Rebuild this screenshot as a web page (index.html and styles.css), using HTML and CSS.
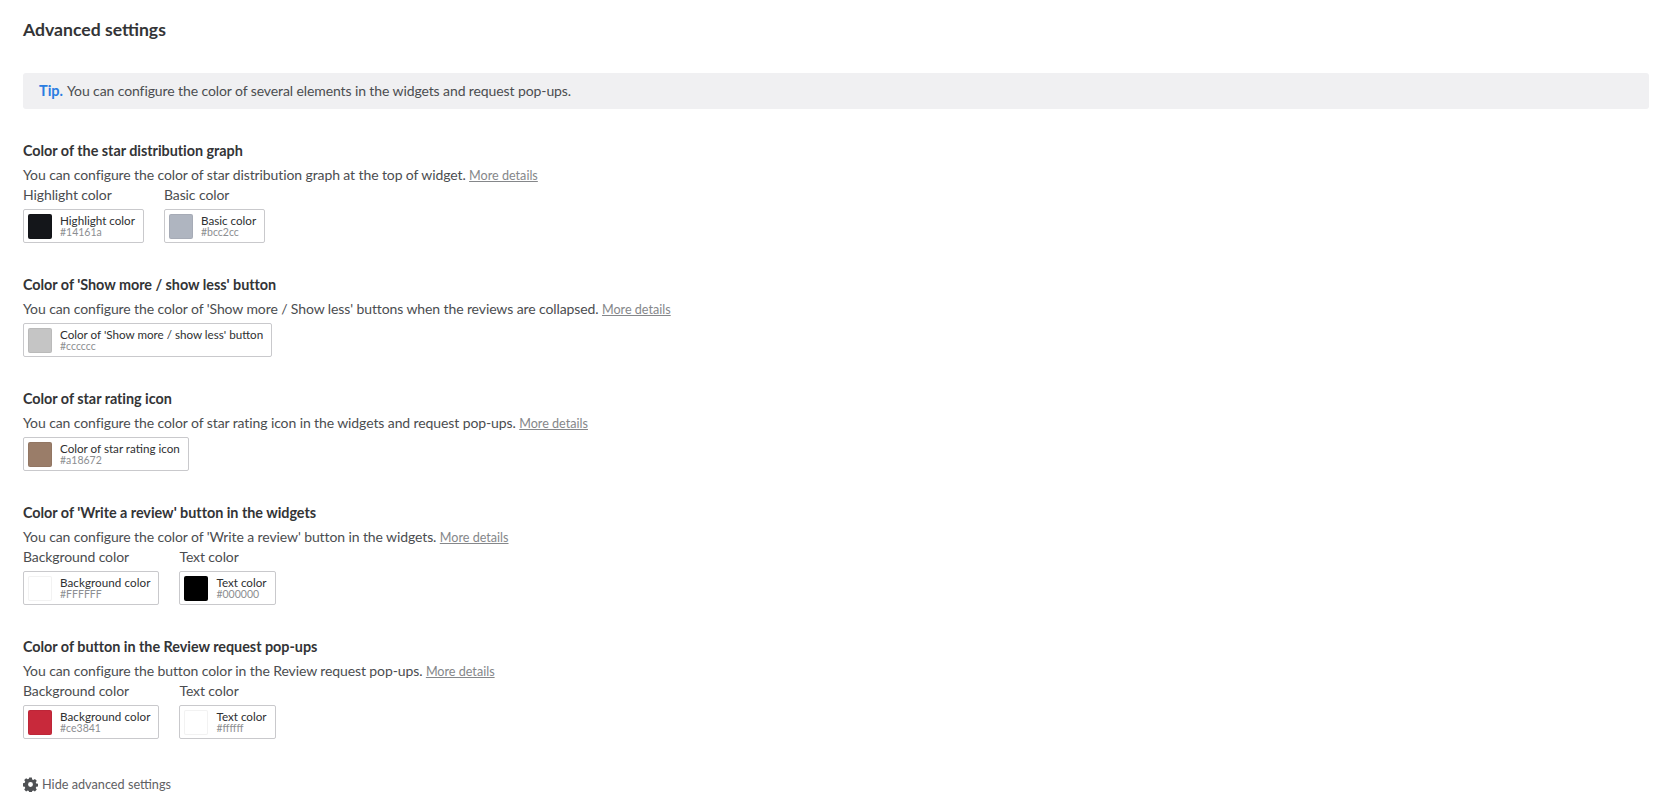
FILE: index.html
```html
<!DOCTYPE html>
<html lang="en">
<head>
<meta charset="utf-8">
<title>Advanced settings</title>
<link rel="stylesheet" href="styles.css">
</head>
<body>
<main class="page">
  <h1 class="page-title">Advanced settings</h1>
  <p class="tip"><strong class="tip-label">Tip.</strong> You can configure the color of several elements in the widgets and request pop-ups.</p>

  <section class="group">
    <h2 class="group-title">Color of the star distribution graph</h2>
    <p class="group-desc">You can configure the color of star distribution graph at the top of widget. <a class="more" href="#">More details</a></p>
    <div class="fields">
      <div class="field">
        <div class="field-label">Highlight color</div>
        <div class="picker"><span class="swatch c-14161a"></span><span class="picker-text"><span class="picker-name">Highlight color</span><span class="picker-value">#14161a</span></span></div>
      </div>
      <div class="field">
        <div class="field-label">Basic color</div>
        <div class="picker"><span class="swatch c-bcc2cc"></span><span class="picker-text"><span class="picker-name">Basic color</span><span class="picker-value">#bcc2cc</span></span></div>
      </div>
    </div>
  </section>

  <section class="group">
    <h2 class="group-title">Color of 'Show more / show less' button</h2>
    <p class="group-desc">You can configure the color of 'Show more / Show less' buttons when the reviews are collapsed. <a class="more" href="#">More details</a></p>
    <div class="fields">
      <div class="field">
        <div class="picker"><span class="swatch c-cccccc"></span><span class="picker-text"><span class="picker-name">Color of 'Show more / show less' button</span><span class="picker-value">#cccccc</span></span></div>
      </div>
    </div>
  </section>

  <section class="group">
    <h2 class="group-title">Color of star rating icon</h2>
    <p class="group-desc">You can configure the color of star rating icon in the widgets and request pop-ups. <a class="more" href="#">More details</a></p>
    <div class="fields">
      <div class="field">
        <div class="picker"><span class="swatch c-a18672"></span><span class="picker-text"><span class="picker-name">Color of star rating icon</span><span class="picker-value">#a18672</span></span></div>
      </div>
    </div>
  </section>

  <section class="group">
    <h2 class="group-title">Color of 'Write a review' button in the widgets</h2>
    <p class="group-desc">You can configure the color of 'Write a review' button in the widgets. <a class="more" href="#">More details</a></p>
    <div class="fields">
      <div class="field">
        <div class="field-label">Background color</div>
        <div class="picker"><span class="swatch c-ffffff"></span><span class="picker-text"><span class="picker-name picker-name-wide">Background color</span><span class="picker-value">#FFFFFF</span></span></div>
      </div>
      <div class="field">
        <div class="field-label">Text color</div>
        <div class="picker"><span class="swatch c-000000"></span><span class="picker-text"><span class="picker-name">Text color</span><span class="picker-value">#000000</span></span></div>
      </div>
    </div>
  </section>

  <section class="group">
    <h2 class="group-title">Color of button in the Review request pop-ups</h2>
    <p class="group-desc">You can configure the button color in the Review request pop-ups. <a class="more" href="#">More details</a></p>
    <div class="fields">
      <div class="field">
        <div class="field-label">Background color</div>
        <div class="picker"><span class="swatch c-ce3841"></span><span class="picker-text"><span class="picker-name picker-name-wide">Background color</span><span class="picker-value">#ce3841</span></span></div>
      </div>
      <div class="field">
        <div class="field-label">Text color</div>
        <div class="picker"><span class="swatch c-ffffff"></span><span class="picker-text"><span class="picker-name">Text color</span><span class="picker-value">#ffffff</span></span></div>
      </div>
    </div>
  </section>

  <a class="toggle" href="#">
    <svg class="gear" viewBox="0 0 16 16" aria-hidden="true"><path fill-rule="evenodd" d="M6.6.6h2.8l.4 2 1.1.5 1.8-1.1 2 2-1.1 1.8.5 1.1 2 .4v2.8l-2 .4-.5 1.1 1.1 1.8-2 2-1.8-1.1-1.1.5-.4 2H6.6l-.4-2-1.1-.5-1.8 1.1-2-2 1.100-1.800-.5-1.100-2-.4V6.600l2-.4.5-1.100L1.300 3.300l2-2 1.800 1.100 1.100-.5zM8 5.400a2.600 2.600 0 1 0 0 5.200 2.600 2.600 0 0 0 0-5.200z"/></svg>
    <span>Hide advanced settings</span>
  </a>
</main>
</body>
</html>
```
FILE: styles.css
```css
* { box-sizing: border-box; }
html, body { margin: 0; padding: 0; background: #fff; }
body {
  font-family: "Lato", "Noto Sans", sans-serif;
  color: #4b4d50;
  font-size: 14px;
  letter-spacing: -0.1px;
  line-height: 20px;
}
.page { padding: 18px 8px 0 23px; }
.page-title {
  margin: 0 0 31px;
  font-size: 17.6px;
  line-height: 24px;
  font-weight: 700;
  letter-spacing: 0;
  color: #333436;
}
.tip {
  margin: 0 0 32px;
  height: 36px;
  padding: 8px 16px;
  background: #f0f0f2;
  border-radius: 3px;
}
.tip-label { color: #2a7de1; font-size: 14.5px; font-weight: 700; letter-spacing: 0; margin-right: 1px; }
.group { margin-bottom: 32px; }
.group-title {
  margin: 0 0 4px;
  font-size: 14.4px;
  line-height: 20px;
  font-weight: 700;
  letter-spacing: -0.03px;
  color: #333436;
}
.group-desc { margin: 0; height: 20px; }
.more { color: #85878a; font-size: 12.6px; letter-spacing: 0; text-decoration: underline; }
.fields { display: flex; gap: 20px; padding-top: 4px; }
.field-label { margin: -4px 0 4px; }
.picker {
  display: inline-flex;
  align-items: center;
  gap: 8px;
  height: 34px;
  padding: 0 8px 0 4px;
  background: #fff;
  border: 1px solid #c9c9cc;
  border-radius: 2px;
  vertical-align: top;
}
.swatch {
  width: 24px;
  height: 25px;
  border-radius: 2px;
  border: 1px solid rgba(0, 0, 0, 0.05);
}
.c-14161a { background: #14161a; }
.c-bcc2cc { background: #afb5c0; }
.c-cccccc { background: #c5c5c5; }
.c-a18672 { background: #9a7d69; }
.c-ffffff { background: #fff; }
.c-000000 { background: #000; }
.c-ce3841 { background: #c8293b; }
.picker-text { display: flex; flex-direction: column; letter-spacing: 0; }
.picker-name { font-size: 11.65px; line-height: 12px; color: #2e2f31; white-space: nowrap; }
.picker-name-wide { letter-spacing: 0.06px; }
.picker-value { font-size: 10.5px; line-height: 11px; color: #8c8e91; }
.toggle {
  display: inline-flex;
  align-items: center;
  gap: 4px;
  margin-top: 3px;
  color: #5f6164;
  font-size: 12.7px;
  letter-spacing: 0;
  text-decoration: none;
}
.gear { width: 15px; height: 15px; fill: #4f5154; }
```
